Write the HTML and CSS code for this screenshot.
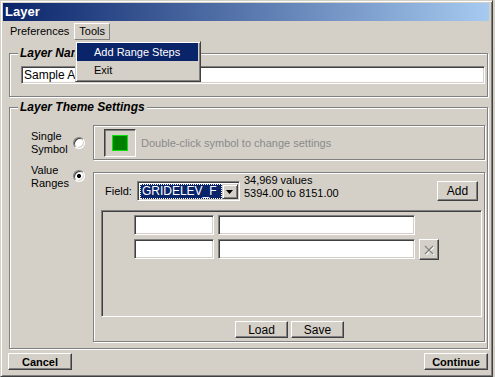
FILE: index.html
```html
<!DOCTYPE html>
<html lang="en">
<head>
    <meta charset="UTF-8">
    <meta name="viewport" content="width=device-width, initial-scale=1.0">
    <title>Layer</title>
    <link rel="stylesheet" href="styles.css">
</head>
<body>

<div class="window">
    <div class="titlebar">Layer</div>

    <div class="menubar">
        <span class="menu-item">Preferences</span>
        <span class="menu-item open">Tools</span>
    </div>

    <fieldset class="group name-group">
        <legend>Layer Name</legend>
        <input type="text" class="field name-input" value="Sample Area">
    </fieldset>

    <fieldset class="group theme-group">
        <legend>Layer Theme Settings</legend>
        <div class="theme-grid">
            <!-- single symbol -->
            <div class="option-label">Single<br>Symbol</div>
            <input type="radio" class="radio" name="mode">
            <div class="panel symbol-panel">
                <div class="swatch"><span class="swatch-fill"></span></div>
                <span class="hint">Double-click symbol to change settings</span>
            </div>

            <!-- value ranges -->
            <div class="option-label ranges-label">Value<br>Ranges</div>
            <input type="radio" class="radio ranges-radio" name="mode" checked>
            <div class="panel ranges-panel">
                <div class="field-row">
                    <span class="field-label">Field:</span>
                    <div class="combo">
                        <span class="combo-value">GRIDELEV_F</span>
                        <span class="combo-btn">
                            <svg width="7" height="4" viewBox="0 0 7 4"><polygon points="0,0 7,0 3.5,4" fill="#000"/></svg>
                        </span>
                    </div>
                    <div class="field-info">34,969 values<br>5394.00 to 8151.00</div>
                    <button class="btn add-btn">Add</button>
                </div>

                <div class="range-list">
                    <div class="range-row">
                        <input type="text" class="field range-min">
                        <input type="text" class="field range-label">
                    </div>
                    <div class="range-row">
                        <input type="text" class="field range-min">
                        <input type="text" class="field range-label">
                        <button class="btn remove-btn">
                            <svg width="10" height="10" viewBox="0 0 10 10">
                                <path d="M2 2 L10 10 M10 2 L2 10" stroke="#fff" stroke-width="1.2"/>
                                <path d="M1 1 L9 9 M9 1 L1 9" stroke="#808080" stroke-width="1.2"/>
                            </svg>
                        </button>
                    </div>
                </div>

                <div class="list-actions">
                    <button class="btn small-btn">Load</button>
                    <button class="btn small-btn">Save</button>
                </div>
            </div>
        </div>
    </fieldset>

    <div class="footer">
        <button class="btn footer-btn">Cancel</button>
        <button class="btn footer-btn">Continue</button>
    </div>

    <!-- open Tools menu -->
    <div class="dropdown">
        <div class="dropdown-item active">Add Range Steps</div>
        <div class="dropdown-item">Exit</div>
    </div>
</div>

</body>
</html>
```

FILE: styles.css
```css
body {
    margin: 0;
    background: #d4d0c8;
    font-family: "Liberation Sans", Arial, sans-serif;
    font-size: 11px;
    color: #000;
    overflow: hidden;
}
.window {
    position: relative;
    width: 493px;
    height: 377px;
    box-sizing: border-box;
    background: #d4d0c8;
    border: 1px solid;
    border-color: #d4d0c8 #404040 #404040 #d4d0c8;
    box-shadow: inset 1px 1px #fff, inset -1px -1px #808080;
    padding: 2px 3px 0 2px;
}
.titlebar {
    height: 18px;
    line-height: 18px;
    padding-left: 2px;
    background: linear-gradient(to right, #0a246a, #a6caf0);
    color: #fff;
    font-weight: bold;
    font-size: 13px;
}
.menubar {
    display: flex;
    height: 19px;
    box-sizing: border-box;
    padding: 2px 0 0 2px;
}
.menu-item {
    padding: 0 4px;
    line-height: 15px;
    border: 1px solid transparent;
}
.menu-item.open {
    border-color: #fff #808080 #808080 #fff;
}
.dropdown {
    position: absolute;
    left: 74px;
    top: 40px;
    width: 126px;
    box-sizing: border-box;
    background: #d4d0c8;
    border: 1px solid;
    border-color: #d4d0c8 #404040 #404040 #d4d0c8;
    box-shadow: inset 1px 1px #fff, inset -1px -1px #808080;
    padding: 1px 2px 2px 1px;
}
.dropdown-item {
    height: 18px;
    line-height: 18px;
    padding-left: 17px;
}
.dropdown-item.active {
    background: #0a246a;
    color: #fff;
}

/* group boxes */
.group {
    margin: 0 1px 0 6px;
    min-width: 0;
    border: 1px solid #808080;
    box-shadow: 1px 1px #fff, inset 1px 1px #fff;
    padding: 0 2px 0 8px;
}
.group legend {
    padding: 0 2px;
    background: #d4d0c8;
    font-size: 12px;
    line-height: 14px;
    font-weight: bold;
    font-style: italic;
}
.name-group {
    margin-top: 6px;
    padding-top: 6px;
    padding-bottom: 12px;
}
.theme-group {
    margin-top: 3px;
    padding-top: 11px;
    padding-bottom: 6px;
}
.field {
    box-sizing: border-box;
    height: 20px;
    margin: 0;
    padding: 0 2px;
    background: #fff;
    border: 1px solid;
    border-color: #808080 #fff #fff #808080;
    box-shadow: inset 1px 1px #404040, inset -1px -1px #d4d0c8;
    font-family: "Liberation Sans", Arial, sans-serif;
    font-size: 12px;
    color: #000;
    outline: none;
}
.name-input {
    display: block;
    width: 464px;
    height: 18px;
    margin-left: 3px;
}

.theme-grid {
    display: grid;
    grid-template-columns: 42px 12px 1fr;
    row-gap: 4px;
    align-items: center;
    margin-left: 13px;
}
.option-label {
    line-height: 13px;
}
.radio {
    appearance: none;
    width: 12px;
    height: 12px;
    margin: 0;
    border-radius: 50%;
    border: 1px solid;
    border-color: #808080 #fff #fff #808080;
    box-shadow: inset 1px 1px #404040, inset -1px -1px #d4d0c8;
    background: #fff;
}
.radio:checked {
    background: radial-gradient(circle, #000 0, #000 1.8px, #fff 2.3px);
}
.ranges-label,
.ranges-radio,
.ranges-panel {
    align-self: start;
}
.ranges-radio {
    margin-top: 6px;
}
.panel {
    margin-left: 8px;
    border: 1px solid #808080;
    box-shadow: 1px 1px #fff, inset 1px 1px #fff;
}
.symbol-panel {
    display: flex;
    align-items: center;
    height: 35px;
    box-sizing: border-box;
    padding-left: 10px;
}
.swatch {
    display: flex;
    align-items: center;
    justify-content: center;
    width: 32px;
    height: 28px;
    box-sizing: border-box;
    border: 1px solid;
    border-color: #404040 #fff #fff #404040;
    box-shadow: inset 1px 1px #808080;
}
.swatch-fill {
    width: 16px;
    height: 16px;
    box-sizing: border-box;
    background: #008000;
    border: 1px solid #10e010;
}
.hint {
    margin-left: 5px;
    color: #8a8a8a;
}

.ranges-panel {
    margin-top: 8px;
    padding: 0 2px 3px 7px;
}
.field-row {
    display: flex;
    align-items: flex-end;
    height: 28px;
}
.field-label {
    margin-left: 4px;
    margin-right: 5px;
    line-height: 19px;
}
.combo {
    display: flex;
    width: 103px;
    height: 20px;
    box-sizing: border-box;
    background: #fff;
    border: 1px solid;
    border-color: #808080 #fff #fff #808080;
    box-shadow: inset 1px 1px #404040, inset -1px -1px #d4d0c8;
    padding: 2px 1px 1px 2px;
}
.combo-value {
    flex: 1;
    background: #0a246a;
    color: #fff;
    font-size: 12px;
    line-height: 15px;
    padding-left: 2px;
    outline: 1px dotted #fff;
    outline-offset: -1px;
}
.combo-btn {
    display: flex;
    align-items: center;
    justify-content: center;
    width: 16px;
    box-sizing: border-box;
    background: #d4d0c8;
    border: 1px solid;
    border-color: #d4d0c8 #404040 #404040 #d4d0c8;
    box-shadow: inset 1px 1px #fff, inset -1px -1px #808080;
}
.field-info {
    margin-left: 4px;
    line-height: 13px;
    margin-bottom: 1px;
}
.btn {
    margin: 0;
    padding: 0;
    background: #d4d0c8;
    border: 1px solid;
    border-color: #fff #404040 #404040 #fff;
    box-shadow: inset -1px -1px #808080;
    font-family: "Liberation Sans", Arial, sans-serif;
    font-size: 12px;
    color: #000;
}
.add-btn {
    margin-left: auto;
    margin-right: 4px;
    width: 41px;
    height: 20px;
}
.range-list {
    margin-top: 9px;
    height: 107px;
    box-sizing: border-box;
    border: 1px solid;
    border-color: #808080 #fff #fff #808080;
    box-shadow: inset 1px 1px #404040;
    padding: 4px 0 0 32px;
}
.range-row {
    display: flex;
    gap: 4px;
    margin-bottom: 4px;
}
.range-min {
    width: 80px;
}
.range-label {
    width: 197px;
}
.remove-btn {
    display: flex;
    align-items: center;
    justify-content: center;
    width: 20px;
    height: 21px;
}
.list-actions {
    display: flex;
    justify-content: center;
    gap: 3px;
    margin-top: 4px;
    padding-right: 4px;
}
.small-btn {
    width: 53px;
    height: 17px;
}
.footer {
    display: flex;
    justify-content: space-between;
    margin-top: 4px;
    padding: 0 1px 0 5px;
}
.footer-btn {
    width: 64px;
    height: 17px;
    font-size: 11px;
    font-weight: bold;
}
```
